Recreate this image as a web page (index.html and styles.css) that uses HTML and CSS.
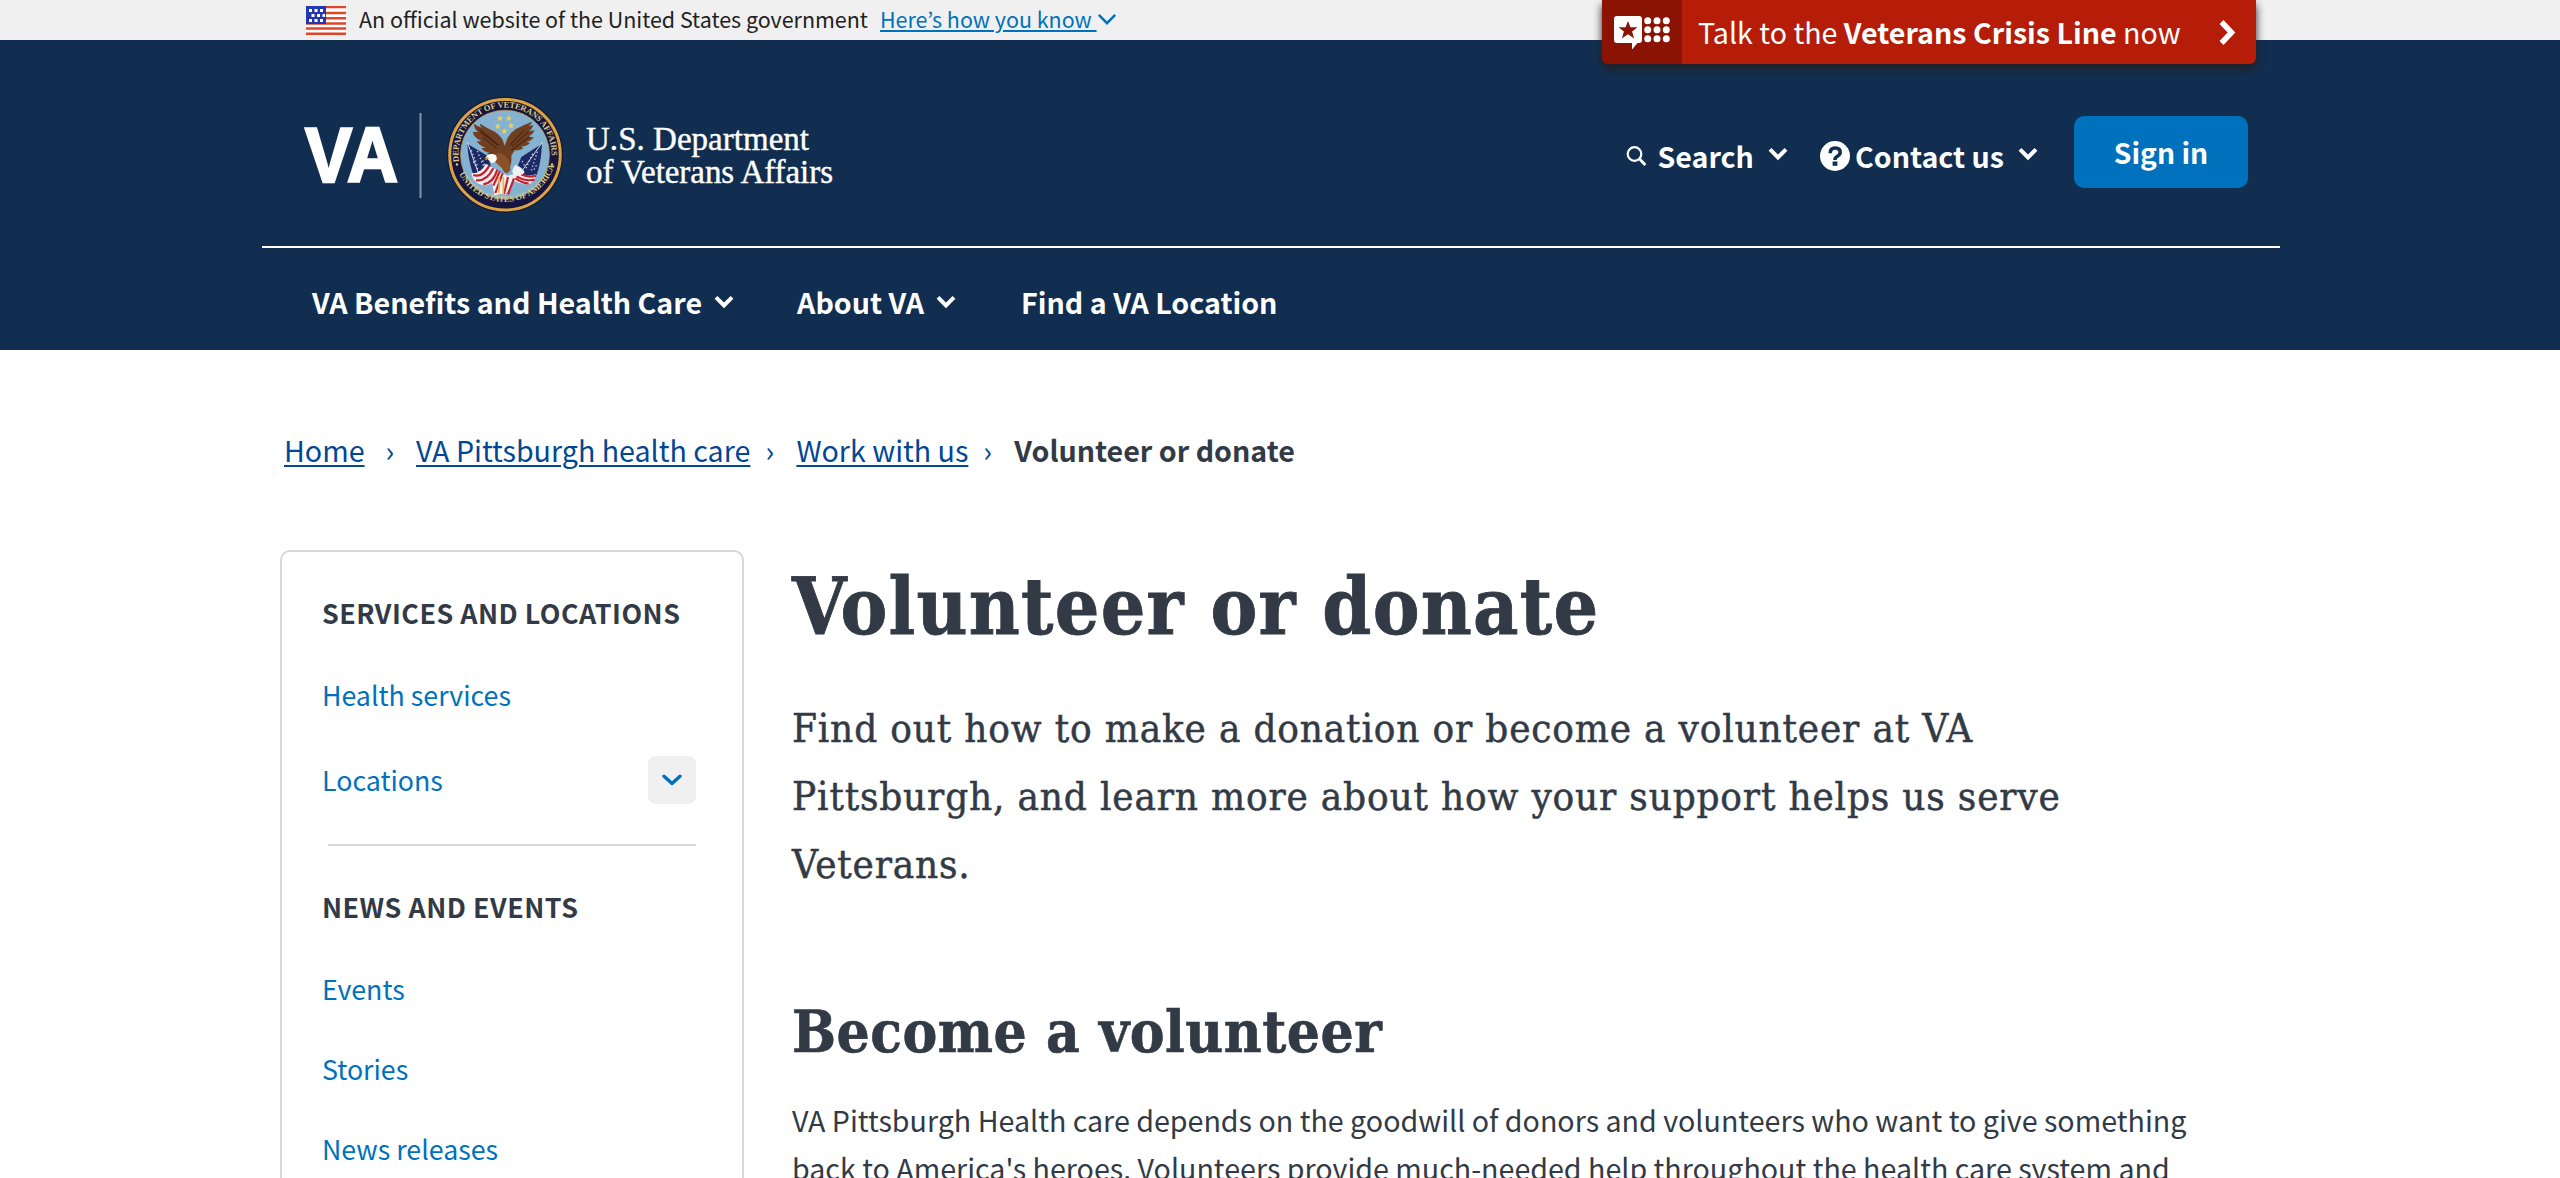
FILE: index.html
```html
<!DOCTYPE html>
<html lang="en">
<head>
<meta charset="utf-8">
<title>Volunteer or donate | VA Pittsburgh health care</title>
<link rel="stylesheet" href="styles.css">
</head>
<body>
<div class="gov-banner">
  <svg class="gov-flag" width="40" height="29" viewBox="0 0 40 29">
    <rect width="40" height="29" fill="#fff"/>
    <path d="M0 1h40M0 7h40M0 12.200h40M0 17.500h40M0 22.500h40M0 27.700h40" stroke="#e0452c" stroke-width="2.400"/>
    <rect width="20" height="18" fill="#2338b0"/>
    <path d="M3 4.500h3m2.500 0h3m2.500 0h3M5.500 9.500h3m2.500 0h3m2.500 0h2.500M3 14.500h3m2.500 0h3m2.500 0h3" stroke="#fff" stroke-width="2.800"/>
  </svg>
  <span class="gov-text">An official website of the United States government</span>
  <a class="gov-link">Here’s how you know&nbsp;</a>
  <svg class="gov-chevron" width="20" height="13" viewBox="0 0 22 14"><path d="M2 2l9 9 9-9" fill="none" stroke="#0071bc" stroke-width="2.800"/></svg>
</div>

<a class="crisis">
  <span class="crisis-icon">
    <svg width="58" height="36" viewBox="0 0 58 36">
      <path d="M3 0h22a3 3 0 0 1 3 3v21a3 3 0 0 1-3 3h-1.500L18 33.500V27H3a3 3 0 0 1-3-3V3a3 3 0 0 1 3-3z" fill="#fff"/>
      <path d="M14 5l2.500 6.200h7l-5.400 4.200 2 7L14 18.200l-6.100 4.200 2-7L4.500 11.200h7z" fill="#8b1303"/>
      <g fill="#fff"><circle cx="33.700" cy="4.700" r="3.500"/><circle cx="43" cy="4.700" r="3.500"/><circle cx="52.300" cy="4.700" r="3.500"/><circle cx="33.700" cy="13.700" r="3.500"/><circle cx="43" cy="13.700" r="3.500"/><circle cx="52.300" cy="13.700" r="3.500"/><circle cx="33.700" cy="22.700" r="3.500"/><circle cx="43" cy="22.700" r="3.500"/><circle cx="52.300" cy="22.700" r="3.500"/></g>
    </svg>
  </span>
  <span class="crisis-text">Talk to the <strong>Veterans Crisis Line</strong> now</span>
  <svg class="crisis-chevron" width="18" height="27" viewBox="0 0 18 27"><path d="M3.500 3l10 10.500-10 10.500" fill="none" stroke="#fff" stroke-width="5.500"/></svg>
</a>

<header class="header">
  <div class="header-top">
    <svg class="logo" width="560" height="140" viewBox="300 85 560 140">
      <defs>
        <path id="arc-top" d="M460.200 166.500A46.500 46.500 0 1 1 549.800 166.500"/>
        <path id="arc-bottom" d="M453.800 158A51.800 51.800 0 0 0 556.200 158"/>
      </defs>
      <text class="logo-va" x="305" y="182" textLength="93" lengthAdjust="spacingAndGlyphs">VA</text>
      <path d="M420.500 113v85" stroke="#8593a8" stroke-width="2"/>
      <circle cx="505" cy="154.700" r="58" fill="#17143f"/>
      <circle cx="505" cy="154.700" r="55.300" fill="none" stroke="#d9a441" stroke-width="3"/>
      <circle cx="505" cy="154.700" r="44.500" fill="#84b2d0" stroke="#b79a55" stroke-width=".800"/>
      <text class="seal-text"><textPath href="#arc-top" startOffset="5" textLength="155">DEPARTMENT OF VETERANS AFFAIRS</textPath></text>
      <text class="seal-text"><textPath href="#arc-bottom" startOffset="17" textLength="122">UNITED STATES OF AMERICA</textPath></text>
      <circle cx="457" cy="164.500" r="1.200" fill="#d8cb86"/><circle cx="552" cy="164.500" r="1.200" fill="#d8cb86"/>
      <g transform="translate(430 85) scale(.33333)">
        <g fill="#f0cf57">
          <path id="star" d="M210 90l2.600 6.500 7 .5-5.400 4.500 1.800 7-6-3.900-6 3.900 1.800-7-5.400-4.500 7-.500z"/>
          <use href="#star" x="26"/><use href="#star" x="-7" y="24"/><use href="#star" x="33" y="22"/><use href="#star" x="13" y="39"/>
        </g>
        <path d="M112 176l60 36 18 52-18 14-44-14q-14-44-16-88z" fill="#1e2a66"/>
        <path d="M336 176l-62 40-18 46 22 14 42-6q14-40 16-94z" fill="#1e2a66"/>
        <path d="M112 172l36 100M337 172l-60 84" stroke="#d8dde6" stroke-width="3"/>
        <path d="M124 196l18 46m0-44l22 54m-34-22l20 34m8-38l16 36M322 200l-18 56m4-50l-22 48m26 0l10-18m-46-8l10 18" stroke="#c7d3e6" stroke-width="4" stroke-dasharray="4 7"/>
        <path d="M124 264q26 4 44-28l44 26 20 10 30-6q28 10 56 2-4 26-26 32-22-4-40-12l-26 42-14-4-18 6-8-38q-18 12-36 4-22-8-26-34z" fill="#f4eeee"/>
        <path d="M130 270q26 10 48-28M138 286q32 4 52-36M160 298q30-4 42-44M190 302l20-44M196 324l22-60M318 272q-24 8-50-8M314 284q-30 6-54-10M296 296q-20-2-40-16M234 328l18-48M222 328l12-52" fill="none" stroke="#c4202f" stroke-width="6.500"/>
        <path d="M206 324q4-30 0-50m14 52v-50" fill="none" stroke="#e5b73e" stroke-width="5"/>
        <path d="M126 140q10 2 18 0-12-8-12-24 12 10 24 12-8-6-6-12 22 14 44 24 24 14 30 42 10-36 34-50 26-14 48-22-2 8-10 14l14-4q-4 14-14 18 10 0 18-2-6 14-18 18 10 4 16 2-8 12-22 14l10 4q-10 10-26 10l6 6q-12 8-26 6l-10 16q2 26-8 40l-6 12q-14-4-12-18-18-10-20-34-16 4-28-8 6 0 8-2-18-2-24-14 8 2 12 0-18-6-26-20 8 2 14 0-22-10-26-28z" fill="#6f3f20"/>
        <path d="M150 140l52 40m-42-22l40 32m-52-58l60 50M296 140l-50 44m52-28l-54 40m38-60l-42 44" stroke="#4a2815" stroke-width="3.500"/>
        <path d="M196 206q24-6 40 20l6 28-10 12-22-22-18-16z" fill="#8a5229"/>
        <path d="M166 218q8-14 26-10 10 4 8 16-6 12-14 10-6-8-20-16z" fill="#fff"/>
        <path d="M170 214l-6 12 14-6z" fill="#e6ad32"/>
        <path d="M256 240q20 6 28 22-12 14-32 8-12-10 4-30z" fill="#eef2f6"/>
      </g>
      <text class="logo-name" x="586" y="149.500" textLength="223">U.S. Department</text>
      <text class="logo-name" x="586" y="182.500" textLength="247">of Veterans Affairs</text>
    </svg>
    <div class="actions">
      <a class="action">
        <svg width="21" height="20" viewBox="0 0 21 20"><circle cx="8.500" cy="8" r="6.800" fill="none" stroke="#fff" stroke-width="2.200"/><path d="M13.300 12.700l6 6.300" stroke="#fff" stroke-width="2.800"/></svg>
        <span class="label search-label">Search</span>
        <svg class="chev" width="20" height="14" viewBox="0 0 20 14"><path d="M2 2.300l8 8 8-8" fill="none" stroke="#fff" stroke-width="4"/></svg>
      </a>
      <a class="action contact">
        <svg width="30" height="30" viewBox="0 0 30 30"><circle cx="15" cy="15" r="15" fill="#fff"/><path d="M10.200 12.200q0-5.200 5-5.200t5 4.300q0 2.300-2.700 3.900-2.500 1.400-2.500 3.200v.6" fill="none" stroke="#112e51" stroke-width="3.600"/><rect x="12.600" y="20.500" width="4.800" height="4.300" fill="#112e51"/></svg>
        <span class="label">Contact us</span>
        <svg class="chev" width="20" height="14" viewBox="0 0 20 14"><path d="M2 2.300l8 8 8-8" fill="none" stroke="#fff" stroke-width="4"/></svg>
      </a>
      <a class="signin">Sign in</a>
    </div>
  </div>
  <nav class="nav">
    <a class="nav-item">VA Benefits and Health Care <svg class="nav-chev" width="20" height="14" viewBox="0 0 20 14"><path d="M2 2.300l8 8 8-8" fill="none" stroke="#fff" stroke-width="4"/></svg></a>
    <a class="nav-item nav-about">About VA <svg class="nav-chev" width="20" height="14" viewBox="0 0 20 14"><path d="M2 2.300l8 8 8-8" fill="none" stroke="#fff" stroke-width="4"/></svg></a>
    <a class="nav-item nav-find">Find a VA Location</a>
  </nav>
</header>

<nav class="crumbs">
  <a>Home</a><span class="sep sep-first">›</span><a>VA Pittsburgh health care</a><span class="sep">›</span><a>Work with us</a><span class="sep">›</span><strong>Volunteer or donate</strong>
</nav>

<div class="layout">
  <aside class="sidebar">
    <h2 class="side-title">Services and locations</h2>
    <a class="side-link side-first">Health services</a>
    <div class="side-row">
      <a>Locations</a>
      <span class="expand"><svg width="20" height="13" viewBox="0 0 20 13"><path d="M2 2.200l8 7.300 8-7.300" fill="none" stroke="#0071bc" stroke-width="3.400" stroke-linecap="round" stroke-linejoin="round"/></svg></span>
    </div>
    <div class="side-rule"></div>
    <h2 class="side-title">News and events</h2>
    <a class="side-link side-first">Events</a>
    <a class="side-link">Stories</a>
    <a class="side-link">News releases</a>
  </aside>
  <main class="main">
    <h1>Volunteer or donate</h1>
    <p class="lead">Find out how to make a donation or become a volunteer at VA<br>Pittsburgh, and learn more about how your support helps us serve<br>Veterans.</p>
    <h2 class="section-title">Become a volunteer</h2>
    <p class="body">VA Pittsburgh Health care depends on the goodwill of donors and volunteers who want to give something<br>back to America's heroes. Volunteers provide much-needed help throughout the health care system and</p>
  </main>
</div>
</body>
</html>
```
FILE: styles.css
```css
* { box-sizing: border-box; }
html, body { height: 1178px; overflow: hidden; }
body {
  position: relative;
  display: flex;
  flex-direction: column;
  margin: 0;
  background: #fff;
  color: #323a45;
  font: 28.64px/48px "Noto Sans CJK KR", "Noto Sans", sans-serif;
}
h1, h2, p { margin: 0; }
svg { display: block; flex: none; }

.gov-banner {
  display: flex;
  flex: none;
  height: 40px;
  padding-left: 306px;
  background: #f0f0f0;
  color: #212121;
  font-size: 21.46px;
  line-height: 37px;
  white-space: nowrap;
}
.gov-flag { margin-top: 6px; }
.gov-text { width: 521px; margin-left: 13px; }
.gov-link {
  width: 217px;
  color: #0071bc;
  text-decoration: underline;
  text-decoration-thickness: 2px;
  text-underline-offset: 2px;
}
.gov-chevron { margin-top: 13px; }

.crisis {
  position: absolute;
  top: 0;
  left: 1602px;
  z-index: 2;
  display: flex;
  align-items: center;
  width: 654px;
  height: 64px;
  border-radius: 0 0 6px 6px;
  background: #b51d09;
  box-shadow: 0 5px 9px #212121;
  color: #fff;
  white-space: nowrap;
}
.crisis-icon {
  width: 80px;
  height: 64px;
  padding: 16px 0 0 12px;
  border-radius: 0 0 0 6px;
  background: #8b1303;
}
.crisis-text { width: 521px; padding-left: 16px; }
.crisis-chevron { margin-left: 15px; }

.header {
  flex: none;
  height: 310px;
  padding-left: 262px;
  background: #112e51;
  color: #fff;
  font-weight: 700;
}
.header-top {
  display: flex;
  justify-content: space-between;
  width: 2018px;
  height: 208px;
  border-bottom: 2px solid #fff;
}
.logo { margin: 45px 0 0 38px; }
.logo-va { fill: #fff; stroke: #fff; stroke-width: 2.5px; font: bold 78px "Liberation Sans", sans-serif; }
.logo-name { fill: #fff; stroke: #fff; stroke-width: .4px; font: 33px "Liberation Serif", serif; }
.seal-text { fill: #d8cb86; font: bold 8.5px "Liberation Serif", serif; }

.actions {
  display: flex;
  align-items: center;
  height: 72px;
  margin: 76px 32px 0 0;
  white-space: nowrap;
}
.action { display: flex; align-items: center; padding-top: 8px; }
.label { margin-left: 5px; }
.search-label { margin-left: 10px; }
.chev { margin: 0 0 4px 14px; }
.contact { margin-left: 32px; }
.signin {
  width: 174px;
  height: 72px;
  margin-left: 36px;
  border-radius: 10px;
  background: #0071bc;
  font-size: 28.3px;
  line-height: 72px;
  text-align: center;
}

.nav { display: flex; height: 102px; padding: 5px 0 0 50px; }
.nav-item { display: flex; align-items: center; white-space: nowrap; }
.nav-chev { margin-left: 12px; }
.nav-about { margin-left: 63px; }
.nav-find { margin-left: 65px; }

.crumbs {
  display: flex;
  flex: none;
  height: 48px;
  margin: 76px 0 0 284px;
  white-space: nowrap;
}
.crumbs a {
  color: #004795;
  text-decoration: underline;
  text-decoration-thickness: 2px;
  text-underline-offset: 3px;
}
.sep { width: 46px; padding-left: 15px; color: #004795; }
.sep-first { width: 51.5px; padding-left: 21px; }

.layout {
  display: grid;
  flex: 1;
  grid-template-columns: 464px 1440px;
  gap: 48px;
  min-height: 0;
  margin: 76px 0 0 280px;
  overflow: hidden;
}
.sidebar {
  display: flex;
  flex-direction: column;
  padding: 41px 46px 0 40px;
  border: 2px solid #d6d7d9;
  border-bottom: 0;
  border-radius: 10px 10px 0 0;
  color: #0071bc;
  font-size: 26.75px;
  line-height: 40px;
}
.side-title {
  color: #323a45;
  font-size: 26.85px;
  line-height: 40px;
  letter-spacing: .5px;
  text-transform: uppercase;
  white-space: nowrap;
}
.side-link { margin-top: 40px; }
.side-first { margin-top: 42px; }
.side-row {
  display: flex;
  flex: none;
  align-items: center;
  justify-content: space-between;
  height: 48px;
  margin-top: 41px;
}
.side-row a { margin-top: -1px; }
.expand {
  display: grid;
  place-items: center;
  width: 48px;
  height: 48px;
  border-radius: 8px;
  background: #f0f0f0;
}
.side-rule { flex: none; height: 2px; margin: 40px 0 41px 6px; background: #d6d7d9; }

.main { padding-top: 17px; }
h1, .lead, .section-title { font-family: "DejaVu Serif Condensed", "DejaVu Serif", serif; white-space: nowrap; }
h1 { font-size: 78px; line-height: 80px; letter-spacing: 1.25px; -webkit-text-stroke: .8px #323a45; }
.lead { margin-top: 47px; font-size: 40px; line-height: 68px; letter-spacing: .83px; -webkit-text-stroke: .5px #323a45; }
.section-title { margin-top: 102px; font-size: 58px; line-height: 64px; letter-spacing: .5px; -webkit-text-stroke: .6px #323a45; }
.body { margin-top: 32px; white-space: nowrap; }
```
